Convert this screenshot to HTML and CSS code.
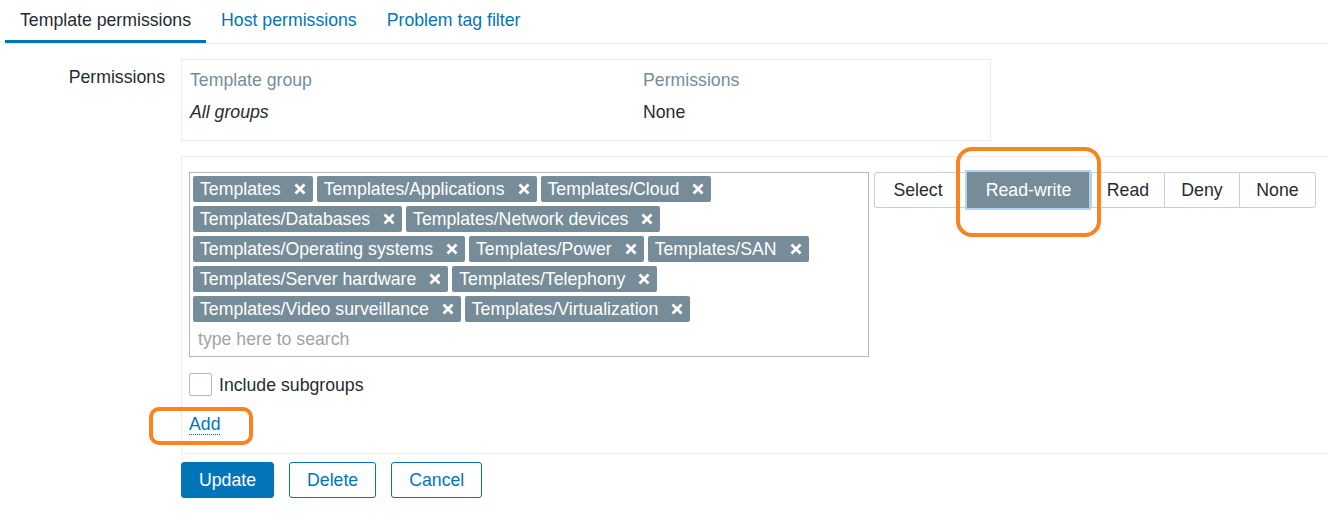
FILE: index.html
```html
<!DOCTYPE html>
<html lang="en">
<head>
<meta charset="utf-8">
<title>Template permissions</title>
<link rel="stylesheet" href="styles.css">
</head>
<body>
<nav class="tabs">
  <a class="tab tab-active">Template permissions</a>
  <a class="tab">Host permissions</a>
  <a class="tab">Problem tag filter</a>
</nav>

<div class="form">
  <div class="form-label">Permissions</div>
  <div class="form-field">
    <div class="perm-table">
      <div class="perm-row perm-head"><span class="cell cell-1">Template group</span><span class="cell">Permissions</span></div>
      <div class="perm-row"><span class="cell cell-1 italic">All groups</span><span class="cell">None</span></div>
    </div>
  </div>

  <div class="form-label"></div>
  <div class="panel">
    <div class="panel-row">
      <div class="ms-col">
        <div class="multiselect">
          <div class="tags">
            <span class="tag">Templates<svg class="x" viewBox="0 0 12 12"><path d="M1.5 1.5L10.5 10.5M10.5 1.5L1.5 10.5"/></svg></span>
            <span class="tag">Templates/Applications<svg class="x" viewBox="0 0 12 12"><path d="M1.5 1.5L10.5 10.5M10.5 1.5L1.5 10.5"/></svg></span>
            <span class="tag">Templates/Cloud<svg class="x" viewBox="0 0 12 12"><path d="M1.5 1.5L10.5 10.5M10.5 1.5L1.5 10.5"/></svg></span>
            <span class="tag">Templates/Databases<svg class="x" viewBox="0 0 12 12"><path d="M1.5 1.5L10.5 10.5M10.5 1.5L1.5 10.5"/></svg></span>
            <span class="tag">Templates/Network devices<svg class="x" viewBox="0 0 12 12"><path d="M1.5 1.5L10.5 10.5M10.5 1.5L1.5 10.5"/></svg></span>
            <span class="tag">Templates/Operating systems<svg class="x" viewBox="0 0 12 12"><path d="M1.5 1.5L10.5 10.5M10.5 1.5L1.5 10.5"/></svg></span>
            <span class="tag">Templates/Power<svg class="x" viewBox="0 0 12 12"><path d="M1.5 1.5L10.5 10.5M10.5 1.5L1.5 10.5"/></svg></span>
            <span class="tag">Templates/SAN<svg class="x" viewBox="0 0 12 12"><path d="M1.5 1.5L10.5 10.5M10.5 1.5L1.5 10.5"/></svg></span>
            <span class="tag">Templates/Server hardware<svg class="x" viewBox="0 0 12 12"><path d="M1.5 1.5L10.5 10.5M10.5 1.5L1.5 10.5"/></svg></span>
            <span class="tag">Templates/Telephony<svg class="x" viewBox="0 0 12 12"><path d="M1.5 1.5L10.5 10.5M10.5 1.5L1.5 10.5"/></svg></span>
            <span class="tag">Templates/Video surveillance<svg class="x" viewBox="0 0 12 12"><path d="M1.5 1.5L10.5 10.5M10.5 1.5L1.5 10.5"/></svg></span>
            <span class="tag">Templates/Virtualization<svg class="x" viewBox="0 0 12 12"><path d="M1.5 1.5L10.5 10.5M10.5 1.5L1.5 10.5"/></svg></span>
          </div>
          <div class="search">type here to search</div>
        </div>
        <label class="check-row"><span class="checkbox"></span><span class="check-label">Include subgroups</span></label>
        <div class="add-row"><a class="link-add">Add</a></div>
      </div>
      <div class="seg">
        <span class="seg-btn seg-select">Select</span>
        <span class="seg-btn seg-rw seg-on">Read-write</span>
        <span class="seg-btn seg-read">Read</span>
        <span class="seg-btn seg-deny">Deny</span>
        <span class="seg-btn seg-none">None</span>
      </div>
    </div>
  </div>

  <div class="form-label"></div>
  <div class="actions">
    <button class="btn btn-primary">Update</button>
    <button class="btn btn-alt">Delete</button>
    <button class="btn btn-alt">Cancel</button>
  </div>
</div>

<div class="mark mark-rw"></div>
<div class="mark mark-add"></div>
</body>
</html>
```

FILE: styles.css
```css
* { box-sizing: border-box; }

body {
  margin: 0;
  font-family: "Liberation Sans", Arial, sans-serif;
  font-size: 17.7px;
  color: #1f2c33;
  background: #ffffff;
  position: relative;
  height: 520px;
  overflow: hidden;
}

/* Tabs */
.tabs {
  display: flex;
  margin-left: 5px;
  border-bottom: 1px solid #e6e9eb;
}
.tab {
  display: block;
  padding: 0 15px;
  line-height: 40px;
  border-bottom: 3px solid transparent;
  color: #0275b8;
  white-space: nowrap;
}
.tab-active {
  color: #1f2c33;
  border-bottom-color: #0275b8;
}

/* Form layout */
.form {
  display: grid;
  grid-template-columns: 165px 1fr;
  column-gap: 16px;
  margin-top: 15px;
}
.form-label {
  text-align: right;
  padding-top: 8px;
  line-height: 20px;
}

/* Permissions table */
.perm-table {
  width: 810px;
  border: 1px solid #ebeef0;
  padding: 4px 0 12px;
}
.perm-row {
  display: grid;
  grid-template-columns: 453px 1fr;
}
.cell {
  padding: 6px 8px;
  line-height: 20px;
}
.perm-head .cell { color: #768d99; }
.italic { font-style: italic; }

/* Panel */
.panel {
  margin-top: 15px;
  border-top: 1px solid #ebeef0;
  border-left: 1px solid #ebeef0;
  border-bottom: 1px solid #ebeef0;
  padding: 15px 0 18px 7px;
}
.panel-row {
  display: flex;
  align-items: flex-start;
}
.ms-col {
  width: 680px;
}
.multiselect {
  width: 680px;
  border: 1px solid #acbac2;
  padding: 3px 3px 4px 3px;
}
.tags {
  display: flex;
  flex-wrap: wrap;
}
.tag {
  display: inline-flex;
  align-items: center;
  height: 26px;
  margin: 0 4px 4px 0;
  padding: 0 7px;
  background: #768d99;
  color: #ffffff;
  border-radius: 2px;
  white-space: nowrap;
}
.x {
  width: 12px;
  height: 12px;
  margin-left: 13px;
  fill: none;
  stroke: #ffffff;
  stroke-width: 2.8;
}
.search {
  height: 26px;
  line-height: 26px;
  padding-left: 5px;
  color: #a3a3a3;
}

.check-row {
  display: flex;
  align-items: center;
  margin-top: 16px;
}
.checkbox {
  width: 23px;
  height: 23px;
  border: 1px solid #aebbc3;
  border-radius: 2px;
  background: #ffffff;
}
.check-label {
  margin-left: 7px;
  line-height: 20px;
}
.add-row {
  margin-top: 18px;
  line-height: 20px;
}
.link-add {
  display: inline-block;
  color: #0275b8;
  border-bottom: 1px dotted #0275b8;
  line-height: 20px;
}

/* Segmented control */
.seg {
  display: flex;
  margin-left: 5px;
  height: 36px;
}
.seg-btn {
  display: block;
  height: 36px;
  line-height: 34px;
  text-align: center;
  border-top: 1px solid #c5cfd5;
  border-bottom: 1px solid #c5cfd5;
  border-left: 1px solid #c5cfd5;
  color: #1f2c33;
  white-space: nowrap;
}
.seg-select { width: 91px; padding-right: 4px; border-radius: 3px 0 0 3px; }
.seg-rw { width: 122px; margin: 0 2px; }
.seg-read { width: 73px; }
.seg-deny { width: 75px; }
.seg-none { width: 77px; border-right: 1px solid #c5cfd5; border-radius: 0 3px 3px 0; }
.seg-on {
  background: #768d99;
  color: #ffffff;
  border-color: #768d99;
  box-shadow: 0 0 0 2px #b3d3f3;
}

/* Actions */
.actions {
  display: flex;
  margin-top: 8px;
}
.btn {
  height: 36px;
  padding: 0 17px;
  font-family: inherit;
  font-size: 17.7px;
  border: 1px solid #0275b8;
  border-radius: 3px;
  margin-right: 15px;
  cursor: pointer;
}
.btn-primary {
  background: #0275b8;
  color: #ffffff;
}
.btn-alt {
  background: #ffffff;
  color: #0275b8;
}

/* Annotation marks */
.mark {
  position: absolute;
  border: 4px solid #f8831f;
}
.mark-rw {
  left: 956px;
  top: 147px;
  width: 145px;
  height: 90px;
  border-radius: 16px;
}
.mark-add {
  left: 149px;
  top: 407px;
  width: 104px;
  height: 38px;
  border-radius: 10px;
}
```
